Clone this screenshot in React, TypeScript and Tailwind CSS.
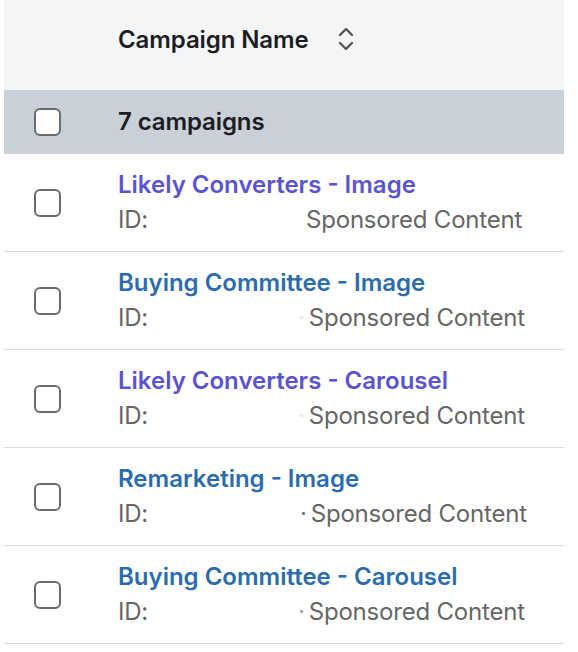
import React from "react";

type Campaign = {
  name: string;
  visited: boolean;
  col: number;
  dot: string;
};

const campaigns: Campaign[] = [
  { name: "Likely Converters - Image", visited: true, col: 188, dot: "" },
  { name: "Buying Committee - Image", visited: false, col: 180, dot: "text-gray-200" },
  { name: "Likely Converters - Carousel", visited: true, col: 180, dot: "text-gray-200" },
  { name: "Remarketing - Image", visited: false, col: 182, dot: "text-gray-500" },
  { name: "Buying Committee - Carousel", visited: false, col: 180, dot: "text-gray-400" },
];

const Checkbox = () => (
  <div className="w-[27px] h-[28px] rounded-[6px] border-2 border-[#6b6b6b] bg-white shrink-0" />
);

const SortIcon = () => (
  <svg width="18" height="26" viewBox="0 0 18 26" fill="none" stroke="#555" strokeWidth="2.4" strokeLinecap="round" strokeLinejoin="round">
    <polyline points="3 9 9 3 15 9" />
    <polyline points="3 17 9 23 15 17" />
  </svg>
);

export default function App() {
  return (
    <div className="w-[578px] h-[652px] bg-white pl-1 pr-[14px] font-['Inter',sans-serif]">
      <div className="h-[90px] bg-[#f4f5f7] flex items-center pl-[114px] pb-[10px]">
        <span className="text-[24px] font-semibold text-[#1d1d1f] tracking-[-0.1px]">Campaign Name</span>
        <span className="ml-[28px] mt-[-2px] flex">
          <SortIcon />
        </span>
      </div>
      <div className="h-[64px] bg-[#c9d0d7] flex items-center pl-[30px]">
        <Checkbox />
        <span className="ml-[57px] text-[24px] font-semibold text-[#1d1d1f] tracking-[-0.1px]">7 campaigns</span>
      </div>
      {campaigns.map((c) => (
        <div key={c.name} className="h-[98px] border-b border-[#dedede] flex items-center pl-[30px]">
          <Checkbox />
          <div className="ml-[57px] flex flex-col">
            <span
              className={`text-[24px] font-semibold leading-[34px] ${
                c.visited ? "text-[#5b54cf]" : "text-[#2b6cae]"
              }`}
            >
              {c.name}
            </span>
            <div className="flex items-center text-[24px] leading-[36px] text-[#666666] tracking-[-0.2px]">
              <span className="inline-block shrink-0" style={{ width: c.col }}>
                ID:
              </span>
              {c.dot && <span className={`${c.dot} mr-[4px]`}>·</span>}
              <span>Sponsored Content</span>
            </div>
          </div>
        </div>
      ))}
    </div>
  );
}
